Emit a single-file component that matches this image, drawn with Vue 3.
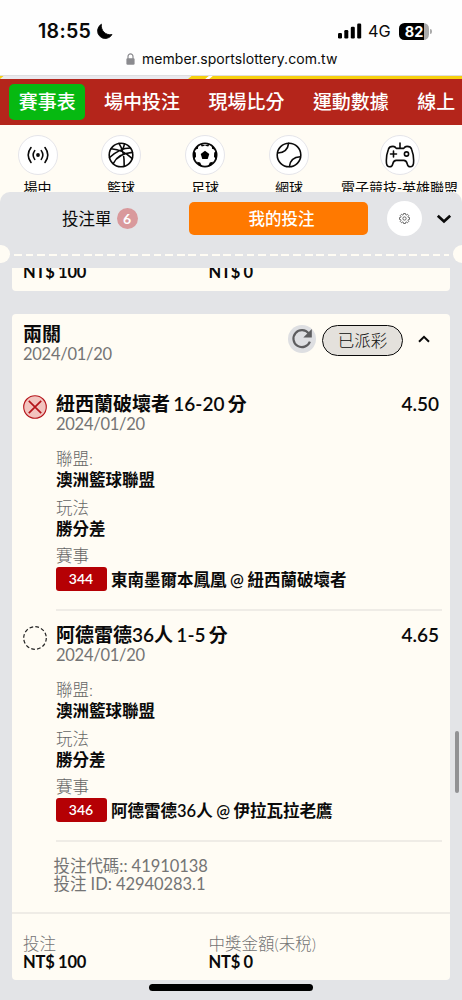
<script setup>
const tabs = ['賽事表', '場中投注', '現場比分', '運動數據', '線上']
const sports = [
  { id: 'live', name: '場中' },
  { id: 'basket', name: '籃球' },
  { id: 'soccer', name: '足球' },
  { id: 'tennis', name: '網球' },
  { id: 'esport', name: '電子競技-英雄聯盟' },
]
const legs = [
  { lost: true, pick: '紐西蘭破壞者 16-20 分', odds: '4.50', code: '344', home: '東南墨爾本鳳凰', away: '紐西蘭破壞者' },
  { lost: false, pick: '阿德雷德36人 1-5 分', odds: '4.65', code: '346', home: '阿德雷德36人', away: '伊拉瓦拉老鷹' },
]
</script>

<template>
  <div class="screen">
    <header class="browser">
      <div class="status">
        <span class="clock">18:55</span>
        <svg class="moon" width="17" height="17" viewBox="0 0 17 17"><path d="M5.4 1.2A7.7 7.7 0 1 0 16 11.6C9.5 12.6 4.6 7.6 5.4 1.2Z" stroke="#0a0a0a" stroke-width=".9" stroke-linejoin="round" /></svg>
        <svg class="signal" width="24" height="16" viewBox="0 0 24 16">
          <rect x="0" y="10" width="4" height="5.5" rx="1.2" /><rect x="6.3" y="7" width="4" height="8.5" rx="1.2" />
          <rect x="12.8" y="3.8" width="4" height="11.7" rx="1.2" /><rect x="19.2" y="0.5" width="4" height="15" rx="1.2" />
        </svg>
        <span class="net">4G</span>
        <span class="battery">82</span><i class="nub"></i>
      </div>
      <div class="url">
        <svg width="9" height="12" viewBox="0 0 9 12"><path d="M2 6V3.4a2.5 2.5 0 0 1 5 0V6" fill="none" stroke="#8b8b8f" stroke-width="1.2" /><rect x=".4" y="5.2" width="8.2" height="6.6" rx="1.2" fill="#8b8b8f" /></svg>
        <span>member.sportslottery.com.tw</span>
      </div>
      <div class="strip"><i></i><b></b></div>
    </header>

    <nav class="nav">
      <span v-for="(t, i) in tabs" :key="t" :class="{ on: i === 0 }">{{ t }}</span>
    </nav>

    <div class="sports">
      <div v-for="s in sports" :key="s.id" class="sport" :class="s.id">
        <div class="disc">
          <svg v-if="s.id === 'live'" width="24" height="20" viewBox="0 0 24 20" class="ln">
            <circle cx="12" cy="10" r="1.9" fill="#0a0a0a" stroke="none" />
            <path d="M8.7 5.6Q5.6 10 8.7 14.4M15.3 5.6Q18.4 10 15.3 14.4M5 2.6Q-.6 10 5 17.4M19 2.6Q24.6 10 19 17.4" />
          </svg>
          <svg v-else-if="s.id === 'basket'" width="26" height="26" viewBox="0 0 26 26" class="ln">
            <circle cx="13" cy="13" r="11.8" />
            <path d="M11 1.4Q16.7 10 16.2 24.2M16.5 1.8Q15.6 6 14.2 8.2M3.2 6.7Q15 7.6 24.3 16.6M1.6 15.5Q12 6 22.4 6M5.2 21.6Q10 11.5 24.4 10.4" />
          </svg>
          <svg v-else-if="s.id === 'soccer'" width="26" height="26" viewBox="0 0 26 26">
            <circle cx="13" cy="13" r="11.6" fill="none" stroke="#0a0a0a" stroke-width="1.8" />
            <path d="M13 8.8l4.3 3.1-1.6 5h-5.4l-1.6-5zM8 1.8l5 1.6 5-1.6-1.8 2.8-3.2-.8-3.2.8zM1.2 9.2l2.6 1.4.2 4.2-2.4 3zM24.8 9.2l-2.6 1.4-.2 4.2 2.4 3zM5 19.8l3.2.8 1.8 3.8-3-.6zM21 19.8l-3.2.8-1.8 3.8 3-.6zM2.9 7.8l3.3-4.6-.2 3.6zM23.1 7.8l-3.3-4.6.2 3.6z" />
          </svg>
          <svg v-else-if="s.id === 'tennis'" width="26" height="26" viewBox="0 0 26 26" class="ln">
            <circle cx="13" cy="13" r="11.8" />
            <path d="M1.8 11Q11.5 10.5 12.6 1.3M13.4 24.5Q14.5 15.3 24.2 14.8" />
          </svg>
          <svg v-else width="30" height="26" viewBox="0 0 30 26" class="ln">
            <path d="M15 1v5M3.4 7.2Q4.2 4.4 8 4.4Q10 4.4 11.3 6.4H18.7Q20 4.4 22 4.4Q25.8 4.4 26.6 7.2Q29.2 14 28.5 21.5Q28.1 24.8 25.3 24.8Q22.8 24.8 22.2 21.8Q21.4 18.4 18.8 18.4H11.2Q8.6 18.4 7.8 21.8Q7.2 24.8 4.7 24.8Q1.9 24.8 1.5 21.5Q.8 14 3.4 7.2ZM5.5 12h6M8.5 9v6" />
            <circle cx="21.5" cy="12" r="2.1" />
          </svg>
        </div>
        <span class="name">{{ s.name }}</span>
      </div>
    </div>

    <section class="panel">
      <div class="switch">
        <div class="slip">投注單<em>6</em></div>
        <div class="mine">我的投注</div>
        <div class="gear">
          <svg width="11" height="11" viewBox="-12 -12 24 24" fill="none" stroke="#555" stroke-width="1.9" stroke-linejoin="round">
            <circle r="3.6" />
            <path d="M-2 -11H2L2.7 -8L3.9 -7.5L6.4 -9.2L9.2 -6.4L7.5 -3.9L8 -2.7L11 -2V2L8 2.7L7.5 3.9L9.2 6.4L6.4 9.2L3.9 7.5L2.7 8L2 11H-2L-2.7 8L-3.9 7.5L-6.4 9.2L-9.2 6.4L-7.5 3.9L-8 2.7L-11 2V-2L-8 -2.7L-7.5 -3.9L-9.2 -6.4L-6.4 -9.2L-3.9 -7.5L-2.7 -8Z" />
          </svg>
        </div>
        <svg class="down" width="16" height="10" viewBox="0 0 16 10"><path d="M1.8 1.8L8 7.5L14.2 1.8" fill="none" stroke="#0a0a0a" stroke-width="2.7" /></svg>
      </div>
      <div class="tear"><i></i><b></b><i></i></div>

      <div class="bets">
        <article class="card prev">
          <div class="sum"><strong>NT$ 100</strong></div>
          <div class="sum"><strong>NT$ 0</strong></div>
        </article>

        <article class="card bet">
          <div class="head">
            <div class="what"><h2>兩關</h2><time>2024/01/20</time></div>
            <div class="reload">
              <svg width="22" height="22" viewBox="0 0 22 22"><path d="M17.7 5.4A8.5 8.5 0 1 0 18.9 13.6" fill="none" stroke="#5d5d5f" stroke-width="2.2" /><path d="M20.8 1V9.5H12.3Z" fill="#5d5d5f" /></svg>
            </div>
            <div class="state">已派彩</div>
            <svg class="up" width="12" height="8" viewBox="0 0 12 8"><path d="M1 6.8L6 1.8L11 6.8" fill="none" stroke="#0a0a0a" stroke-width="2" /></svg>
          </div>

          <div v-for="leg in legs" :key="leg.code" class="leg">
            <svg v-if="leg.lost" class="mark" width="24" height="24" viewBox="0 0 24 24"><circle cx="12" cy="12" r="11.3" fill="#f2c4bf" stroke="#b5151b" stroke-width="1.1" /><path d="M5.8 5.8L18.2 18.2M18.2 5.8L5.8 18.2" stroke="#b5151b" stroke-width="1.7" /></svg>
            <svg v-else class="mark" width="24" height="24" viewBox="0 0 24 24"><circle cx="12" cy="12" r="11.3" fill="none" stroke="#222" stroke-width="1.2" stroke-dasharray="3.7 2.215" /></svg>
            <div class="info">
              <div class="pick"><h3>{{ leg.pick }}</h3><h3>{{ leg.odds }}</h3></div>
              <time>2024/01/20</time>
              <dl>
                <dt>聯盟:</dt><dd>澳洲籃球聯盟</dd>
                <dt>玩法</dt><dd>勝分差</dd>
                <dt>賽事</dt>
                <dd class="match"><em>{{ leg.code }}</em><span>{{ leg.home }} @ {{ leg.away }}</span></dd>
              </dl>
            </div>
          </div>

          <div class="ids"><p>投注代碼:: 41910138</p><p>投注 ID: 42940283.1</p></div>
          <div class="foot">
            <div class="sum"><span>投注</span><strong>NT$ 100</strong></div>
            <div class="sum"><span>中獎金額(未稅)</span><strong>NT$ 0</strong></div>
          </div>
        </article>
      </div>
    </section>
    <div class="thumb"></div>
    <div class="home"></div>
  </div>
</template>

<style>
body { margin: 0; overflow: hidden; }
</style>

<style scoped>
* { box-sizing: border-box; margin: 0; padding: 0; }
.screen { position: relative; width: 462px; height: 1000px; overflow: hidden; background: #fffcf4; display: flex; flex-direction: column; font: 400 16.5px/20px Lato, "Noto Sans CJK TC", sans-serif; color: #0a0a0a; white-space: nowrap; }
svg { display: block; flex: none; }
h2, h3 { font-size: 19px; font-weight: 600; line-height: 20px; word-spacing: -1.4px; }
em, i { font-style: normal; }

.browser { height: 79px; flex: none; background: #fefefe; display: flex; flex-direction: column; font-family: Inter, sans-serif; }
.status { height: 46px; padding: 16px 0 0 38px; display: flex; align-items: center; }
.clock { width: 54px; font-size: 19.6px; font-weight: 600; letter-spacing: .3px; }
.moon { margin-left: 4px; }
.signal { margin-left: 225px; }
.net { margin-left: 6px; width: 24px; font-size: 16.3px; line-height: 20px; }
.battery { margin-left: 7px; width: 30px; height: 17px; border-radius: 5.5px; background: linear-gradient(90deg, #000 25px, #aaa 25px); color: #fff; font-size: 14.5px; font-weight: 700; line-height: 17px; text-align: center; }
.nub { width: 2px; height: 5px; margin-left: 1px; border-radius: 0 2px 2px 0; background: #aaa; }
.url { height: 29px; padding: 0 0 4px 126px; display: flex; align-items: center; gap: 7px; font-size: 14px; letter-spacing: .06px; }
.strip { height: 4px; display: flex; background: #f6d00f; border-top: 1px solid #dedee0; }
.strip i { width: 188px; background: #e9e9ee; transform: skewX(-50deg); transform-origin: bottom; }
.strip b { width: 4px; margin-left: 19px; background: #fff; transform: skewX(-50deg); }

.nav { height: 46px; flex: none; background: #b4251b; display: flex; align-items: center; gap: 9.5px; padding: 0 0 1px 9.2px; overflow: hidden; color: #fff; font-size: 18.98px; font-weight: 500; font-family: "Noto Sans CJK TC", sans-serif; }
.nav span { height: 36px; line-height: 34px; padding: 0 9.5px; border-radius: 5px; flex: none; }
.nav .on { background: #06b911; }

.sports { height: 67px; flex: none; overflow: hidden; padding-top: 9.5px; display: flex; }
.sport { width: 84px; flex: none; display: flex; flex-direction: column; align-items: center; }
.sport.live { width: 79px; padding-right: 4px; }
.sport.esport { width: 137px; }
.disc { width: 40px; height: 40px; flex: none; border-radius: 50%; background: #fff; border: 1px solid #e5e5ea; display: flex; align-items: center; justify-content: center; }
.ln { fill: none; stroke: #0a0a0a; stroke-width: 1.6; stroke-linecap: round; stroke-linejoin: round; }
.name { margin-top: 3px; font-size: 14px; flex: none; }

.panel { height: 808px; flex: none; background: #e3e4e7; border-radius: 10px 10px 0 0; display: flex; flex-direction: column; }
.switch { height: 53px; display: flex; align-items: center; }
.slip { margin-left: 62px; width: 127px; display: flex; align-items: center; gap: 6px; }
.slip em { width: 21px; height: 21px; margin-left: -1px; border-radius: 50%; background: #d9999c; color: #fff; font-size: 14px; font-weight: 700; line-height: 21px; text-align: center; }
.mine { width: 179px; height: 33px; border-radius: 5px; background: #ff7900; color: #fff; font-weight: 500; line-height: 34px; padding-left: 6px; text-align: center; }
.gear { margin-left: 19px; width: 35px; height: 35px; border-radius: 50%; background: #fff; display: flex; align-items: center; justify-content: center; }
.down { margin: 1px 0 0 14px; }
.tear { height: 23px; padding-bottom: 5px; display: flex; align-items: center; justify-content: space-between; overflow: hidden; }
.tear i { width: 9.5px; height: 18.5px; background: #fffcf4; border-radius: 0 10px 10px 0; }
.tear i:last-child { border-radius: 10px 0 0 10px; }
.tear b { flex: 1; height: 2px; margin: 2px 4px 0 4.5px; background: repeating-linear-gradient(90deg, #fffcf4 0 7.8px, transparent 7.8px 11.63px); }
.bets { flex: 1; padding: 0 12px; overflow: hidden; }
.card { background: #fffcf4; border-radius: 0 0 4px 4px; }
.prev { height: 23px; padding-left: 11px; display: flex; overflow: hidden; }
.prev strong { margin-top: -5px; }
.sum { width: 185.5px; display: flex; flex-direction: column; }
.sum span { line-height: 18px; color: #747474; font-weight: 300; }
.sum strong { line-height: 18px; font-weight: 700; letter-spacing: -.22px; word-spacing: -.2px; }
.bet { margin-top: 23px; height: 666px; border-radius: 4px; }
.head { height: 78px; padding: 10px 0 0 11px; display: flex; align-items: flex-start; }
.what { width: 265px; display: flex; flex-direction: column; }
time { display: block; height: 20px; line-height: 21px; color: #747474; font-size: 16.5px; letter-spacing: -.27px; }
.reload { margin-top: 1px; width: 28px; height: 28px; border-radius: 50%; background: #dedfe2; display: flex; align-items: center; justify-content: center; }
.state { margin: 1px 0 0 6px; width: 81px; height: 31px; border: 1.3px solid #0a0a0a; border-radius: 16px; background: #e4e1dc; font-weight: 300; line-height: 31px; text-align: center; }
.up { margin: 11px 0 0 15px; }
.leg { height: 231px; padding: 2px 8px 0 11px; display: flex; }
.mark { margin: .5px 9px 0 -.5px; }
.info { flex: 1; height: 217px; padding-left: .5px; border-bottom: 2px solid #efece6; }
.pick { display: flex; justify-content: space-between; padding-right: 3px; }
dl { margin-top: 15px; }
dt { font-weight: 300; color: #666; }
dd { height: 28.5px; line-height: 22px; font-weight: 600; word-spacing: -.6px; }
.match { display: flex; align-items: center; gap: 4.5px; height: 25px; }
.match span { padding-top: 2px; }
.match em { width: 51px; height: 24px; margin-left: -.5px; border-radius: 3px; background: #b50004; color: #fff; font-size: 14px; line-height: 24px; text-align: center; }
.ids { height: 58px; padding: 3px 0 0 41.5px; color: #747474; line-height: 18px; letter-spacing: -.05px; }
.foot { height: 67px; padding: 21px 0 0 11px; border-top: 2px solid #efece6; display: flex; }
.thumb { position: absolute; left: 455px; top: 731px; width: 4px; height: 62px; border-radius: 2px; background: #929294; }
.home { position: absolute; left: 149px; top: 984px; width: 164px; height: 7px; border-radius: 4px; background: #000; }
</style>
